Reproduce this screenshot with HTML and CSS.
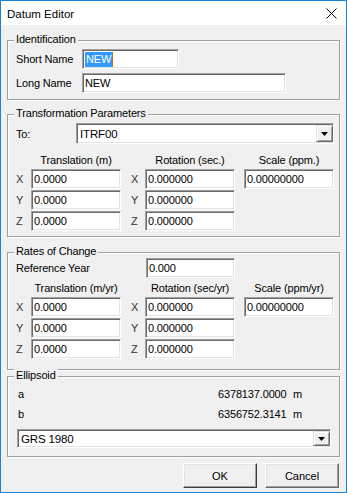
FILE: index.html
```html
<!DOCTYPE html>
<html lang="en">
<head>
    <meta charset="UTF-8">
    <meta name="viewport" content="width=device-width, initial-scale=1.0">
    <title>Datum Editor</title>
    <link rel="stylesheet" href="styles.css">
</head>
<body>

<div class="window">
    <div class="titlebar">
        <span class="title">Datum Editor</span>
        <svg class="close" width="11" height="11" viewBox="0 0 11 11">
            <path d="M0.5 0.5 L10.5 10.5 M10.5 0.5 L0.5 10.5" stroke="#000" stroke-width="1" fill="none"/>
        </svg>
    </div>

    <div class="client">
        <!-- Identification -->
        <fieldset class="group group-ident">
            <legend>Identification</legend>
            <div class="row">
                <span class="lbl-name">Short Name</span>
                <div class="field field-short"><span class="sel">NEW</span></div>
            </div>
            <div class="row">
                <span class="lbl-name">Long Name</span>
                <div class="field field-long">NEW</div>
            </div>
        </fieldset>

        <!-- Transformation Parameters -->
        <fieldset class="group group-trans">
            <legend>Transformation Parameters</legend>
            <div class="row row-to">
                <span class="lbl-to">To:</span>
                <div class="combo combo-to">
                    <span class="combo-text">ITRF00</span>
                    <span class="drop"><svg width="7" height="4" viewBox="0 0 7 4"><path d="M0 0 H7 L3.5 4 Z" fill="#000"/></svg></span>
                </div>
            </div>
            <div class="vec">
                <div class="head c2">Translation (m)</div>
                <div class="head c4">Rotation (sec.)</div>
                <div class="head c5">Scale (ppm.)</div>

                <span class="axis">X</span><div class="field">0.0000</div>
                <span class="axis">X</span><div class="field">0.000000</div>
                <div class="field">0.00000000</div>

                <span class="axis">Y</span><div class="field">0.0000</div>
                <span class="axis">Y</span><div class="field">0.000000</div>
                <div></div>

                <span class="axis">Z</span><div class="field">0.0000</div>
                <span class="axis">Z</span><div class="field">0.000000</div>
                <div></div>
            </div>
        </fieldset>

        <!-- Rates of Change -->
        <fieldset class="group group-rates">
            <legend>Rates of Change</legend>
            <div class="row row-year">
                <span class="lbl-year">Reference Year</span>
                <div class="field field-year">0.000</div>
            </div>
            <div class="vec">
                <div class="head c2">Translation (m/yr)</div>
                <div class="head c4">Rotation (sec/yr)</div>
                <div class="head c5">Scale (ppm/yr)</div>

                <span class="axis">X</span><div class="field">0.0000</div>
                <span class="axis">X</span><div class="field">0.000000</div>
                <div class="field">0.00000000</div>

                <span class="axis">Y</span><div class="field">0.0000</div>
                <span class="axis">Y</span><div class="field">0.000000</div>
                <div></div>

                <span class="axis">Z</span><div class="field">0.0000</div>
                <span class="axis">Z</span><div class="field">0.000000</div>
                <div></div>
            </div>
        </fieldset>

        <!-- Ellipsoid -->
        <fieldset class="group group-ellipsoid">
            <legend>Ellipsoid</legend>
            <div class="erow erow-a">
                <span class="elbl">a</span>
                <span class="evalue">6378137.0000</span>
                <span class="eunit">m</span>
            </div>
            <div class="erow">
                <span class="elbl">b</span>
                <span class="evalue">6356752.3141</span>
                <span class="eunit">m</span>
            </div>
            <div class="combo combo-ellipsoid">
                <span class="combo-text">GRS 1980</span>
                <span class="drop"><svg width="7" height="4" viewBox="0 0 7 4"><path d="M0 0 H7 L3.5 4 Z" fill="#000"/></svg></span>
            </div>
        </fieldset>

        <div class="buttons">
            <button class="btn btn-default">OK</button>
            <button class="btn">Cancel</button>
        </div>
    </div>
</div>

</body>
</html>
```

FILE: styles.css
```css
html, body {
    margin: 0;
    padding: 0;
}

body {
    font-family: "Liberation Sans", Arial, sans-serif;
    font-size: 11px;
    color: #000;
    background: #fff;
}

.window {
    width: 347px;
    height: 493px;
    box-sizing: border-box;
    border: 1px solid #1883d7;
    background: #f0f0f0;
    display: flex;
    flex-direction: column;
}

.titlebar {
    height: 24px;
    background: #fff;
    display: flex;
    align-items: center;
    justify-content: space-between;
    padding: 0 9px 0 6px;
}

.title {
    font-size: 11.5px;
    padding-top: 2px;
}

.close {
    margin-top: 1px;
}

.client {
    flex: 1;
    padding: 0 6px;
    display: flex;
    flex-direction: column;
    letter-spacing: -0.15px;
}

/* group boxes */
.group {
    margin: 0;
    padding: 0 5px 0 8px;
    min-width: 0;
    border: 1px solid #a0a0a0;
    box-shadow: inset 1px 1px 0 #fff, 1px 1px 0 #fff;
}

.group legend {
    padding: 0 2px 2px;
    margin-left: -2px;
    line-height: 13px;
    background: #f0f0f0;
}

.group-ident { margin-top: 8px; padding-bottom: 6px; }
.group-trans { margin-top: 7px; padding-bottom: 5px; }
.group-rates { margin-top: 8px; padding-bottom: 10px; }
.group-ellipsoid { margin-top: -1px; padding-bottom: 8px; }

.row {
    display: flex;
    align-items: center;
    height: 20px;
}

.row + .row {
    margin-top: 4px;
}

.group-ident .row:first-of-type {
    margin-top: 1px;
}

.lbl-name { width: 66px; }
.lbl-to { width: 60px; }
.lbl-year { width: 130px; }

.row-to {
    height: 21px;
    margin-top: 1px;
}

.row-year {
    margin-top: -2px;
}

/* sunken edit box */
.field {
    height: 20px;
    box-sizing: border-box;
    background: #fff;
    border-top: 1px solid #a0a0a0;
    border-left: 1px solid #a0a0a0;
    border-bottom: 1px solid #fff;
    border-right: 1px solid #fff;
    box-shadow: inset 1px 1px 0 #696969, inset -1px -1px 0 #e3e3e3;
    padding: 0 2px;
    line-height: 18px;
    white-space: nowrap;
}

.field-short { width: 97px; }
.field-long { width: 204px; }
.field-year { width: 89px; }

.sel {
    background: #3399ff;
    color: #fff;
    padding: 1px 1px 2px;
    border-right: 1px solid #c8691c;
}

/* combo box */
.combo {
    display: flex;
    box-sizing: border-box;
    background: #fff;
    border-top: 1px solid #a0a0a0;
    border-left: 1px solid #a0a0a0;
    border-bottom: 1px solid #fff;
    border-right: 1px solid #fff;
    box-shadow: inset 1px 1px 0 #696969, inset -1px -1px 0 #e3e3e3;
}

.combo-to {
    width: 258px;
    height: 21px;
}

.combo-ellipsoid {
    width: 314px;
    height: 19px;
    margin: 1px 0 0 1px;
}

.combo-text {
    flex: 1;
    padding-left: 3px;
    display: flex;
    align-items: center;
    font-size: 11.5px;
}

.drop {
    width: 17px;
    margin: 1px 0 1px 0;
    box-sizing: border-box;
    background: #f0f0f0;
    border-top: 1px solid #e3e3e3;
    border-left: 1px solid #e3e3e3;
    border-bottom: 1px solid #696969;
    border-right: 1px solid #696969;
    box-shadow: inset 1px 1px 0 #fff, inset -1px -1px 0 #a0a0a0;
    display: flex;
    align-items: center;
    justify-content: center;
}

/* X / Y / Z grids */
.vec {
    display: grid;
    grid-template-columns: 15px 100px 14px 99px 90px;
    grid-template-rows: auto repeat(3, 20px);
    row-gap: 1px;
}

.group-trans .vec { margin-top: 10px; }
.group-rates .vec { margin-top: 4px; }

.vec .field {
    width: 90px;
}

.head {
    width: 90px;
    text-align: center;
    line-height: 13px;
    margin-bottom: 1px;
}

.c2 { grid-column: 2; }
.c4 { grid-column: 4; }
.c5 { grid-column: 5; }

.axis {
    line-height: 20px;
    color: #333;
}

/* ellipsoid values */
.erow {
    display: flex;
    height: 20px;
    line-height: 13px;
    padding-left: 2px;
}

.erow-a {
    margin-top: 4px;
}

.elbl { width: 200px; }
.evalue { width: 75px; }

/* dialog buttons */
.buttons {
    display: flex;
    justify-content: flex-end;
    gap: 8px;
    margin-top: 6px;
    padding-right: 1px;
}

.btn {
    width: 74px;
    height: 25px;
    font-family: inherit;
    font-size: 11px;
    color: #000;
    background: #f0f0f0;
    border: 1px solid;
    border-color: #fff #696969 #696969 #fff;
    box-shadow: inset -1px -1px 0 #a0a0a0, inset 1px 1px 0 #e3e3e3;
    padding: 0;
}

.btn-default {
    border-color: #fff #3c3c3c #3c3c3c #fff;
}
```
